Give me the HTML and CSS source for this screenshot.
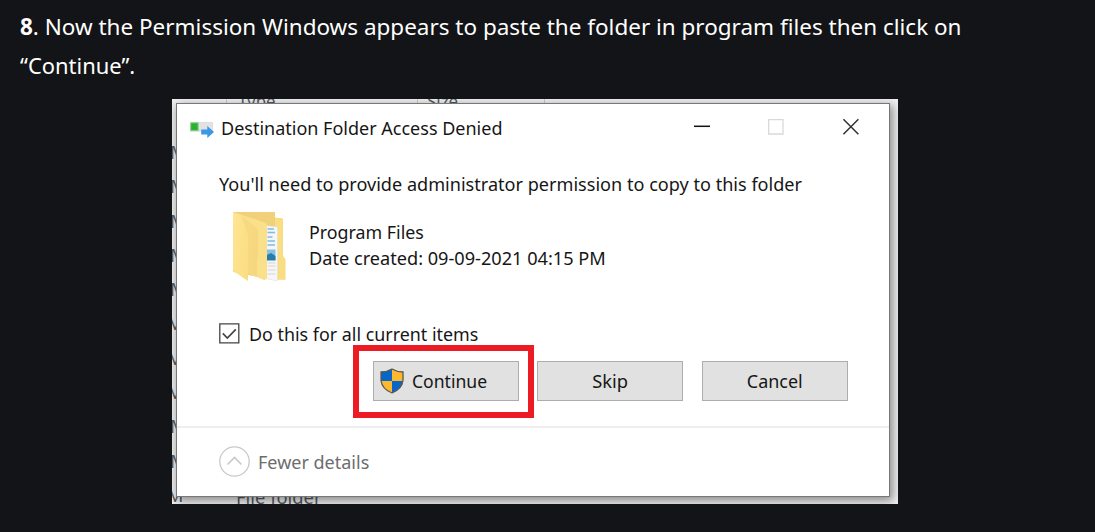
FILE: index.html
```html
<!DOCTYPE html>
<html lang="en">
<head>
<meta charset="utf-8">
<title>Permission step</title>
<link rel="stylesheet" href="styles.css">
</head>
<body>
<p class="step"><span class="line line-a"><b>8</b>. Now the Permission Windows appears to paste the folder in program files then click on</span><span class="line line-b">“Continue”.</span></p>
<div class="shot">
  <div class="behind">
    <span class="rule r1"></span><span class="rule r2"></span><span class="rule r3"></span>
    <span class="head h1">Type</span><span class="head h2">Size</span>
    <div class="times"><i>M</i><i>M</i><i>M</i><i>M</i><i>M</i><i class="in">M</i><i class="in">M</i><i class="in">M</i><i>M</i><i>M</i><i class="last">M</i></div>
    <span class="type">File folder</span>
  </div>
  <section class="dialog">
    <header class="titlebar">
      <svg class="copy" width="25" height="18" viewBox="0 0 25 18"><path fill="#e2e2e2" stroke="#d2d2d2" stroke-width=".6" d="M.4 1.4h22.2v8.8H.4z"/><path fill="#2cb12f" stroke="#8ed18f" d="M.7 1.8h7.5v7.9H.7z"/><path fill="#3b98e6" d="M11.2 8.4h6.1V5l6.7 6-6.7 6v-3.5h-6.1z"/></svg>
      <span class="title"><span class="t">Destination Folder Access Denied</span></span>
      <svg class="controls" width="168" height="18" viewBox="0 0 168 18" fill="none"><path stroke="#111" stroke-width="1.5" d="M0 8.3h16"/><path stroke="#d9d9d9" stroke-width="1.3" d="M74.7 1.7h14.3v14.3H74.7z"/><path stroke="#333" stroke-width="1.5" d="M149.4 1.3l15 15m0-15l-15 15"/></svg>
    </header>
    <p class="message"><span class="t">You'll need to provide administrator permission to copy to this folder</span></p>
    <div class="item">
      <svg width="54" height="70" viewBox="0 0 54 70">
        <defs><linearGradient id="front" x2="1" y2=".3"><stop stop-color="#ffe694"/><stop offset="1" stop-color="#f8d879"/></linearGradient></defs>
        <path fill="#f0d078" d="M0 0h42v5.500l6 .7q2 .2 2 2v36l2.300 3v20.200H38L0 60z"/>
        <path fill="#f9dd83" d="M42 6l6 .3q2 .2 2 2v36l2.300 3v20.200H42z"/>
        <path fill="#f6f6f6" stroke="#dedede" stroke-width=".5" d="M29 13l15.500 2v54L30 66z"/>
        <path stroke="#7dbce6" stroke-width="1.300" d="M34.500 17h6.500M34.500 20.500h7.500M34.500 25h5M34.500 29h7.500M34.500 33h7.500"/>
        <path fill="#83c2e8" d="M34 37.500h8.500V48H34z"/><path fill="#287da8" d="M34 43l4-2 4.500 3v4.500H34z"/>
        <path stroke="#d5d5d5" d="M34.500 51h8M34.500 54h8M34.500 58h8M34.500 62h8"/>
        <path fill="url(#front)" d="M0 1q0-1 1.500-.6L32 10.500q2 .7 2 2.600v52.500L31.500 68 15 61.500V69L1 59.500Q0 59 0 57.500z"/>
        <path fill="#f3d67f" opacity=".65" d="M8 3l18 7v37l-2 4v14l-9-3.500V23z"/>
        <path fill="#fbe08b" d="M8 3l24 8q2 .7 2 2.600v52.500L31.500 68 24 65V48l1-4V19q0-2-2-3z"/>
      </svg>
      <div class="info"><div><span class="t t1">Program Files</span></div><div><span class="t t2">Date created: 09-09-2021 04:15 PM</span></div></div>
    </div>
    <div class="check"><svg width="21" height="21" viewBox="0 0 21 21" fill="none"><path stroke="#444" stroke-width="1.300" d="M.8.8h19v19H.8z"/><path stroke="#444" stroke-width="1.700" d="M3.800 10.300l4.500 4.700 8.500-8.700"/></svg><span class="t">Do this for all current items</span></div>
    <div class="actions">
      <div class="highlight"><div class="button continue"><svg width="24" height="26" viewBox="0 0 24 26"><path fill="#ffb82e" d="M12 1Q17 4 23 4v8.500Q22 21 12 25 2 21 1 12.500V4Q7 4 12 1z"/><path fill="#0767c8" d="M12 1v12H1V4Q7 4 12 1z"/><path fill="#0767c8" d="M12 13h11Q22 21 12 25z"/><path fill="none" stroke="#5a5a50" stroke-width="1.300" d="M12 1Q17 4 23 4v8.500Q22 21 12 25 2 21 1 12.500V4Q7 4 12 1z"/></svg><span class="t">Continue</span></div></div>
      <div class="button skip"><span class="t">Skip</span></div>
      <div class="button cancel"><span class="t">Cancel</span></div>
    </div>
    <footer class="details"><svg width="31" height="31" viewBox="0 0 31 31" fill="none" stroke="#c9c9c9" stroke-width="1.300"><circle cx="15.500" cy="15.500" r="14.700"/><path stroke-width="1.600" d="M8.500 18.500l7-7 7 7"/></svg><span class="t">Fewer details</span></footer>
  </section>
</div>
</body>
</html>
```
FILE: styles.css
```css
* { box-sizing: border-box; }
body { margin: 0; height: 532px; overflow: hidden; background: #131417; color: #fff; font-family: "Noto Sans", sans-serif; }
svg { display: block; flex: none; }
.step { margin: 0; padding: 7px 20px 0 19.500px; height: 99px; font: 22.500px/39px "Noto Sans", sans-serif; }
.line { display: block; width: max-content; white-space: nowrap; }
.t, .line { transform-origin: 0 50%; }
.line-a { transform: scaleX(.999); }
.line-b { transform: scaleX(.975); }
.shot { position: relative; width: 726px; height: 405px; margin-left: 172px; padding: 4px; overflow: hidden; background: #f1f1f1; }
.behind { position: absolute; inset: 0; color: #555b62; font-size: 18px; line-height: 26px; overflow: hidden; }
.rule { position: absolute; top: 0; width: 1px; height: 5px; background: #ccc; }
.r1 { left: 54px; } .r2 { left: 245px; } .r3 { left: 372px; }
.head { position: absolute; top: -11px; transform: scaleX(.94); transform-origin: 0 50%; }
.h1 { left: 66px; } .h2 { left: 255px; }
.times { position: absolute; left: -2px; top: 36px; }
.times i { display: block; font-style: normal; height: 34.300px; line-height: 34.300px; }
.times .in { margin-left: -3px; }
.times .last { margin-left: -3px; }
.type { position: absolute; left: 64px; top: 385px; transform: scaleX(1.02); transform-origin: 0 50%; }
.dialog { position: relative; width: 714px; height: 394px; border: 1.500px solid #777; background: #fff; color: #161616; font-size: 18.500px; line-height: 26px; box-shadow: 2px 3px 9px 1px rgba(0,0,0,.42); }
.t { display: inline-block; white-space: nowrap; }
.titlebar { display: flex; padding: 11px 0 0 13px; height: 64px; }
.copy { margin-top: 6px; }
.title { width: 479px; padding-left: 5.500px; }
.controls { margin-top: 3px; }
.message { margin: 0; padding: 3px 0 0 42px; height: 44px; }
.item { display: flex; padding-left: 56px; height: 108px; }
.info { padding: 7px 0 0 21.500px; }
.check { display: flex; gap: 9px; padding: 2px 0 0 42px; height: 25px; align-items: center; }
.actions { display: flex; height: 81px; padding-left: 176px; }
.highlight { width: 181px; height: 73px; padding: 11px 9px; border: 6px solid #ed1c24; }
.button { width: 146px; height: 40px; border: 1.500px solid #adadad; background: #e1e1e1; display: flex; align-items: center; justify-content: center; flex: none; }
.highlight .button { margin-left: 5px; margin-top: -1px; }
.continue { justify-content: flex-start; padding-left: 6px; gap: 7.500px; }
.skip { margin: 16px 0 0 3px; }
.cancel { margin: 16px 0 0 19px; }
.button .t { transform-origin: 50% 50%; }
.details { border-top: 2px solid #eee; height: 67px; padding: 18px 0 0 42px; display: flex; gap: 7.500px; color: #6d6d6d; line-height: 31px; }
.title .t { transform: scaleX(.973); }
.message .t { transform: scaleX(.978); }
.info .t1 { transform: scaleX(.963); }
.info .t2 { transform: scaleX(.981); }
.check .t { transform: scaleX(.966); }
.details .t { transform: scaleX(.973); }
.continue .t { transform: scaleX(.95); transform-origin: 0 50%; }
.skip .t { transform: scaleX(.99); }
.cancel .t { transform: scaleX(.97); }
```
